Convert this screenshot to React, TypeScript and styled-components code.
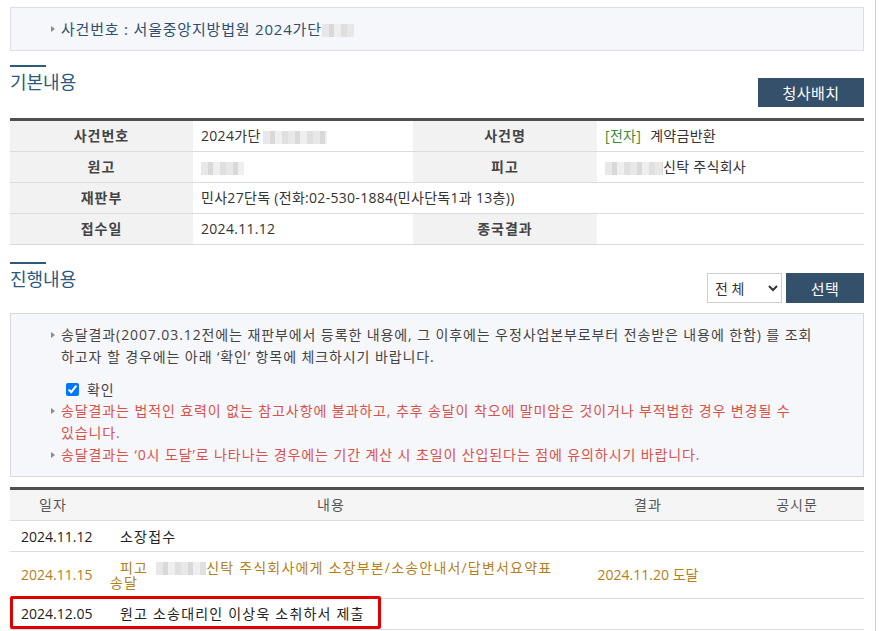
import styled, { createGlobalStyle } from 'styled-components';

const GlobalStyle = createGlobalStyle`
    * { box-sizing: border-box; }
    body {
        margin: 0;
        background: #fff;
        font-family: "Open Sans", "Noto Sans CJK KR", sans-serif;
        font-size: 14px;
        color: #333;
    }
`;

const Page = styled.div`
    width: 876px;
    min-height: 631px;
    padding: 7px 11px 0 10px;
    border-right: 1px solid #cdcdcd;
`;

const CaseBox = styled.div`
    height: 44px;
    display: flex;
    align-items: center;
    padding-left: 39px;
    border: 1px solid #dcdfe4;
    background: #f5f7fa;
    color: #2f4e70;
    font-size: 15px;
    letter-spacing: 0.8px;
`;

/* line with the small grey triangle in front */
const Bullet = styled.div<{ $red?: boolean }>`
    position: relative;
    padding-left: 11px;
    line-height: 22px;
    color: ${(p) => (p.$red ? '#d8514b' : 'inherit')};
    &::before {
        content: '';
        position: absolute;
        left: 1px;
        top: 8px;
        border-left: 4px solid #8a8a8a;
        border-top: 3px solid transparent;
        border-bottom: 3px solid transparent;
    }
`;

const Blur = styled.span<{ $w: number; $gap?: number }>`
    display: inline-block;
    width: ${(p) => p.$w}px;
    height: 13px;
    margin-left: ${(p) => p.$gap ?? 0}px;
    vertical-align: middle;
    background: repeating-linear-gradient(
        90deg,
        #e4e4e4 0 7px,
        #d2d2d2 7px 12px,
        #ececec 12px 19px,
        #dadada 19px 25px
    );
    opacity: 0.85;
`;

const SectionHeader = styled.div<{ $top: number; $bottom: number }>`
    display: flex;
    justify-content: space-between;
    align-items: flex-start;
    margin: ${(p) => p.$top}px 0 ${(p) => p.$bottom}px;
`;

const SectionTitle = styled.h2`
    margin: 0;
    font-size: 18px;
    font-weight: normal;
    line-height: 24px;
    color: #2a5a80;
    &::before {
        content: '';
        display: block;
        width: 36px;
        height: 2px;
        margin-bottom: 3px;
        background: #2d5a7b;
    }
`;

const Controls = styled.div`
    display: flex;
    gap: 4px;
    margin-top: 11px;
`;

const DarkButton = styled.button<{ $w: number; $h: number; $top?: number }>`
    width: ${(p) => p.$w}px;
    height: ${(p) => p.$h}px;
    margin-top: ${(p) => p.$top ?? 0}px;
    border: 0;
    background: #34506b;
    color: #fff;
    font-family: inherit;
    font-size: 15px;
    letter-spacing: 0.5px;
    cursor: pointer;
`;

const Select = styled.select`
    width: 75px;
    height: 30px;
    padding: 0 2px 0 3px;
    border: 1px solid #cfcfcf;
    background: #fff;
    color: #333;
    font-family: inherit;
    font-size: 14px;
`;

const InfoTable = styled.table`
    width: 100%;
    table-layout: fixed;
    border-collapse: collapse;
    border-top: 3px solid #505050;
`;

const LabelCell = styled.th`
    padding: 0;
    line-height: 30px;
    background: #f2f2f2;
    color: #444;
    font-weight: bold;
    letter-spacing: 1px;
    text-align: center;
    border-bottom: 1px solid #dcdcdc;
`;

const ValueCell = styled.td`
    padding: 0 8px;
    line-height: 30px;
    color: #333;
    letter-spacing: 0.3px;
    border-bottom: 1px solid #dcdcdc;
`;

const Tag = styled.span`
    color: #3b8b3b;
    margin-right: 9px;
`;

const NoticeBox = styled.div`
    padding: 10px 36px 10px 39px;
    border: 1px solid #d9d9d9;
    background: #f6f7fa;
    color: #444;
    letter-spacing: 0.9px;
    word-break: keep-all;
`;

const CheckRow = styled.label`
    display: flex;
    align-items: center;
    gap: 8px;
    height: 22px;
    margin: 10px 0 0 16px;
    input {
        width: 13px;
        height: 13px;
        margin: 0;
    }
`;

const HistoryTable = styled.table`
    width: 100%;
    margin-top: 10px;
    table-layout: fixed;
    border-collapse: collapse;
    border-top: 3px solid #505050;
`;

const HeadCell = styled.th`
    padding: 8px 0;
    line-height: 14px;
    background: #f5f5f5;
    color: #555;
    font-weight: normal;
    letter-spacing: 1px;
    text-align: center;
    border-bottom: 1px solid #dcdcdc;
`;

const Row = styled.tr<{ $delivered?: boolean }>`
    color: ${(p) => (p.$delivered ? '#b3801c' : '#222')};
`;

const Cell = styled.td<{ $center?: boolean }>`
    position: relative;
    padding: 7.5px 11px;
    line-height: 15px;
    text-align: ${(p) => (p.$center ? 'center' : 'left')};
    vertical-align: middle;
    border-bottom: 1px solid #dcdcdc;
`;

const ContentCell = styled(Cell)`
    padding: 7.5px 10px 7.5px 14px;
    text-indent: 10px;
    letter-spacing: 1.2px;
`;

/* red annotation drawn over the last row */
const Highlight = styled.div`
    position: absolute;
    left: 0;
    top: -3px;
    width: 371px;
    height: 33px;
    border: 3px solid #e00000;
    border-radius: 2px;
    pointer-events: none;
`;

const history = [
	{ date: '2024.11.12', text: '소장접수', result: '' },
	{ date: '2024.11.15', text: '', result: '2024.11.20 도달', delivered: true },
	{ date: '2024.12.05', text: '원고 소송대리인 이상욱 소취하서 제출', result: '', marked: true },
];

const App = () => {
	return (
		<Page>
			<GlobalStyle />
			<CaseBox>
				<Bullet>
					사건번호 : 서울중앙지방법원 2024가단<Blur $w={32} />
				</Bullet>
			</CaseBox>

			<SectionHeader $top={14} $bottom={11}>
				<SectionTitle>기본내용</SectionTitle>
				<DarkButton $w={106} $h={29} $top={13}>
					청사배치
				</DarkButton>
			</SectionHeader>

			<InfoTable>
				<colgroup>
					<col style={{ width: 183 }} />
					<col style={{ width: 220 }} />
					<col style={{ width: 184 }} />
					<col />
				</colgroup>
				<tbody>
					<tr>
						<LabelCell>사건번호</LabelCell>
						<ValueCell>
							2024가단<Blur $w={64} $gap={2} />
						</ValueCell>
						<LabelCell>사건명</LabelCell>
						<ValueCell>
							<Tag>[전자]</Tag>계약금반환
						</ValueCell>
					</tr>
					<tr>
						<LabelCell>원고</LabelCell>
						<ValueCell>
							<Blur $w={43} />
						</ValueCell>
						<LabelCell>피고</LabelCell>
						<ValueCell>
							<Blur $w={58} />
							신탁 주식회사
						</ValueCell>
					</tr>
					<tr>
						<LabelCell>재판부</LabelCell>
						<ValueCell colSpan={3}>
							민사27단독 (전화:02-530-1884(민사단독1과 13층))
						</ValueCell>
					</tr>
					<tr>
						<LabelCell>접수일</LabelCell>
						<ValueCell>2024.11.12</ValueCell>
						<LabelCell>종국결과</LabelCell>
						<ValueCell />
					</tr>
				</tbody>
			</InfoTable>

			<SectionHeader $top={17} $bottom={10}>
				<SectionTitle>진행내용</SectionTitle>
				<Controls>
					<Select defaultValue="all">
						<option value="all">전 체</option>
					</Select>
					<DarkButton $w={78} $h={30}>
						선택
					</DarkButton>
				</Controls>
			</SectionHeader>

			<NoticeBox>
				<Bullet>
					송달결과(2007.03.12전에는 재판부에서 등록한 내용에, 그 이후에는
					우정사업본부로부터 전송받은 내용에 한함) 를 조회 하고자 할 경우에는 아래
					‘확인’ 항목에 체크하시기 바랍니다.
				</Bullet>
				<CheckRow>
					<input type="checkbox" defaultChecked />
					확인
				</CheckRow>
				<Bullet $red>
					송달결과는 법적인 효력이 없는 참고사항에 불과하고, 추후 송달이 착오에
					말미암은 것이거나 부적법한 경우 변경될 수 있습니다.
				</Bullet>
				<Bullet $red>
					송달결과는 ‘0시 도달’로 나타나는 경우에는 기간 계산 시 초일이 산입된다는
					점에 유의하시기 바랍니다.
				</Bullet>
			</NoticeBox>

			<HistoryTable>
				<colgroup>
					<col style={{ width: 86 }} />
					<col style={{ width: 470 }} />
					<col style={{ width: 164 }} />
					<col />
				</colgroup>
				<thead>
					<tr>
						<HeadCell>일자</HeadCell>
						<HeadCell>내용</HeadCell>
						<HeadCell>결과</HeadCell>
						<HeadCell>공시문</HeadCell>
					</tr>
				</thead>
				<tbody>
					{history.map((h) => (
						<Row key={h.date} $delivered={h.delivered}>
							<Cell>
								{h.date}
								{h.marked && <Highlight />}
							</Cell>
							<ContentCell>
								{h.delivered ? (
									<>
										피고<Blur $w={50} $gap={8} />
										신탁 주식회사에게 소장부본/소송안내서/답변서요약표
										<br />
										송달
									</>
								) : (
									h.text
								)}
							</ContentCell>
							<Cell $center>{h.result}</Cell>
							<Cell />
						</Row>
					))}
				</tbody>
			</HistoryTable>
		</Page>
	);
};

export default App;
